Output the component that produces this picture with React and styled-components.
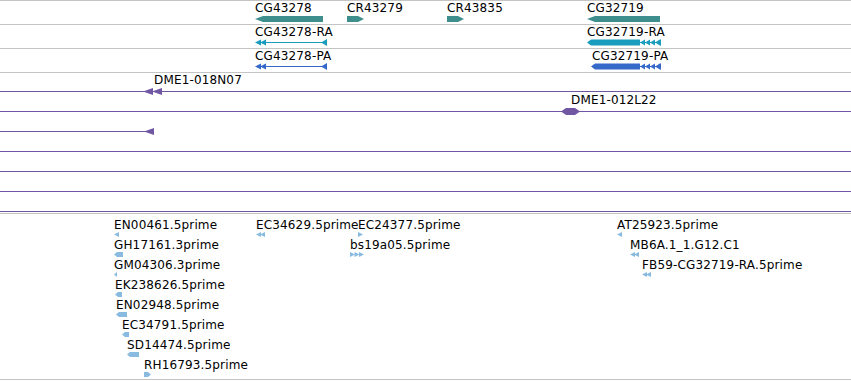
import React from 'react';
import styled, { createGlobalStyle } from 'styled-components';

const GlobalStyle = createGlobalStyle`
    html, body {
        margin: 0;
        padding: 0;
        background: #ffffff;
    }
    body {
        font-family: "DejaVu Sans", "Liberation Sans", sans-serif;
        font-size: 12px;
        color: #000;
    }
`;

const GENE = '#3e8e8e';
const RA = '#1a9dbc';
const PA = '#3569c9';
const CLONE = '#7157a3';
const EST = '#88bbdf';
const GRID = '#c4c4c4';

const Browser = styled.div`
    width: 851px;
    height: 381px;
    display: flex;
    flex-direction: column;
    overflow: hidden;
`;

const Track = styled.div`
    display: flex;
    flex-direction: column;
    border-top: ${p => (p.$top ? `1px solid ${GRID}` : 'none')};
    border-bottom: 1px solid ${GRID};
    padding: ${p => p.$pad || '0'};
`;

const Row = styled.div`
    position: relative;
    height: ${p => p.$h}px;
    border-bottom: ${p => (p.$line ? `1px solid ${GRID}` : 'none')};
    flex: none;
`;

// clones are drawn as lines running across the view
const CloneLine = styled.div`
    position: absolute;
    top: 18px;
    left: ${p => p.$from}px;
    width: ${p => p.$to - p.$from}px;
    height: 1px;
    background: ${CLONE};
`;

const Feature = styled.div`
    position: absolute;
    left: ${p => p.$x}px;
    top: ${p => p.$top || 0}px;
    display: flex;
    flex-direction: column;
    align-items: flex-start;
`;

const Label = styled.span`
    font-family: "DejaVu Sans", "Liberation Sans", sans-serif;
    font-size: 12px;
    line-height: 13px;
    letter-spacing: 0.15px;
    white-space: nowrap;
    color: #000;
    margin-left: ${p => p.$dx || 0}px;
`;

const Glyph = styled.svg`
    display: block;
    margin-top: ${p => p.$gap || 0}px;
    overflow: visible;
`;

const leftBar = (x, w, h, t, y = 0) =>
    `${x},${y + h / 2} ${x + t},${y} ${x + w},${y} ${x + w},${y + h} ${x + t},${y + h}`;
const rightBar = (x, w, h, t, y = 0) =>
    `${x},${y} ${x + w - t},${y} ${x + w},${y + h / 2} ${x + w - t},${y + h} ${x},${y + h}`;
const leftTri = (x, w, h, y = 0) => `${x},${y + h / 2} ${x + w},${y} ${x + w},${y + h}`;
const rightTri = (x, w, h, y = 0) => `${x},${y} ${x + w},${y + h / 2} ${x},${y + h}`;

const Shape = ({ w, h, gap, color, polys = [], lines = [] }) => (
    <Glyph width={w} height={h} $gap={gap} viewBox={`0 0 ${w} ${h}`}>
        {lines.map(([x1, x2, y], i) => (
            <rect key={'l' + i} x={x1} y={y} width={x2 - x1} height={1} fill={color} />
        ))}
        {polys.map((pts, i) => (
            <polygon key={i} points={pts} fill={color} />
        ))}
    </Glyph>
);

const genes = [
    { x: 255, label: 'CG43278', w: 68, polys: [leftBar(0, 68, 6, 8)] },
    { x: 347, label: 'CR43279', w: 17, polys: [rightBar(0, 17, 6, 6)] },
    { x: 447, label: 'CR43835', w: 17, polys: [rightBar(0, 17, 6, 6)] },
    { x: 587, label: 'CG32719', w: 73, polys: [leftBar(0, 73, 6, 8)] },
];

const shortTranscript = {
    w: 73,
    lines: [[6, 68, 3]],
    polys: [leftTri(0, 6, 6, 0.5), leftTri(5, 6, 6, 0.5), leftTri(66, 6, 7)],
};

const longTranscript = w => {
    const bar = w - 21;
    const tris = [0, 5, 10, 15].map(o => leftTri(bar + o, 5, 6, 0.5));
    return {
        w,
        lines: [[bar, w, 3]],
        polys: [leftBar(0, bar, 6, 4, 0.5), ...tris, leftTri(w - 5, 5, 7)],
    };
};

const transcripts = [
    [
        { x: 255, label: 'CG43278-RA', ...shortTranscript },
        { x: 587, label: 'CG32719-RA', ...longTranscript(74) },
    ],
    [
        { x: 255, label: 'CG43278-PA', ...shortTranscript },
        { x: 591, dx: 1, label: 'CG32719-PA', ...longTranscript(70) },
    ],
];

const clones = [
    { from: 0, to: 851, x: 143, dx: 11, label: 'DME1-018N07', w: 20, polys: [leftTri(0, 10, 7), leftTri(9, 10, 7)] },
    {
        from: 0, to: 851, x: 561, dx: 10, label: 'DME1-012L22', w: 19,
        polys: ['0,3.5 5,0 14,0 19,3.5 14,7 5,7'],
    },
    { from: 0, to: 148, x: 144, w: 10, polys: [leftTri(0, 10, 7)] },
    { from: 0, to: 851 },
    { from: 0, to: 851 },
    { from: 0, to: 851 },
    { from: 0, to: 851 },
];

const twoLeft = [leftTri(0, 5, 5), leftTri(4, 5, 5)];

const ests = [
    [
        { x: 114, label: 'EN00461.5prime', w: 5, polys: [leftTri(0, 5, 5)] },
        { x: 256, label: 'EC34629.5prime', w: 9, polys: twoLeft },
        { x: 358, label: 'EC24377.5prime', w: 5, polys: [rightTri(0, 5, 5)] },
        { x: 617, label: 'AT25923.5prime', w: 5, polys: [leftTri(0, 5, 5)] },
    ],
    [
        { x: 114, label: 'GH17161.3prime', w: 9, polys: [leftBar(0, 9, 5, 3)] },
        { x: 350, label: 'bs19a05.5prime', w: 14, polys: [rightTri(0, 5, 5), rightTri(4.5, 5, 5), rightTri(9, 5, 5)] },
        { x: 630, label: 'MB6A.1_1.G12.C1', w: 10, polys: twoLeft },
    ],
    [
        { x: 114, label: 'GM04306.3prime', w: 3, polys: [leftTri(0, 3, 5)] },
        { x: 642, label: 'FB59-CG32719-RA.5prime', w: 10, polys: twoLeft },
    ],
    [{ x: 115, label: 'EK238626.5prime', w: 7, polys: [leftBar(0, 7, 5, 3)] }],
    [{ x: 116, label: 'EN02948.5prime', w: 11, polys: [leftBar(0, 11, 5, 3)] }],
    [{ x: 122, label: 'EC34791.5prime', w: 7, polys: [leftBar(0, 7, 5, 3)] }],
    [{ x: 127, label: 'SD14474.5prime', w: 12, polys: [leftBar(0, 12, 5, 3)] }],
    [{ x: 144, label: 'RH16793.5prime', w: 7, polys: [rightBar(0, 7, 5, 3)] }],
];

const App = () => (
    <>
        <GlobalStyle />
        <Browser>
            <Track $top>
                <Row $h={23} $line>
                    {genes.map(g => (
                        <Feature key={g.label} $x={g.x} $top={1}>
                            <Label>{g.label}</Label>
                            <Shape w={g.w} h={6} gap={1} color={GENE} polys={g.polys} />
                        </Feature>
                    ))}
                </Row>
                {transcripts.map((row, i) => (
                    <Row key={i} $h={23} $line={i === 0}>
                        {row.map(t => (
                            <Feature key={t.label} $x={t.x} $top={1}>
                                <Label $dx={t.dx}>{t.label}</Label>
                                <Shape
                                    w={t.w}
                                    h={7}
                                    color={i === 0 ? RA : PA}
                                    polys={t.polys}
                                    lines={t.lines}
                                />
                            </Feature>
                        ))}
                    </Row>
                ))}
            </Track>

            <Track>
                {clones.map((c, i) => (
                    <Row key={i} $h={20}>
                        <CloneLine $from={c.from} $to={c.to} />
                        {c.polys && (
                            <Feature $x={c.x} $top={c.label ? 1 : 15}>
                                {c.label && <Label $dx={c.dx}>{c.label}</Label>}
                                <Shape w={c.w} h={7} gap={c.label ? 1 : 0} color={CLONE} polys={c.polys} />
                            </Feature>
                        )}
                    </Row>
                ))}
            </Track>

            <Track $pad="5px 0 0">
                {ests.map((row, i) => (
                    <Row key={i} $h={20}>
                        {row.map(e => (
                            <Feature key={e.label} $x={e.x}>
                                <Label>{e.label}</Label>
                                <Shape w={e.w} h={5} gap={0} color={EST} polys={e.polys} />
                            </Feature>
                        ))}
                    </Row>
                ))}
            </Track>
        </Browser>
    </>
);

export default App;
